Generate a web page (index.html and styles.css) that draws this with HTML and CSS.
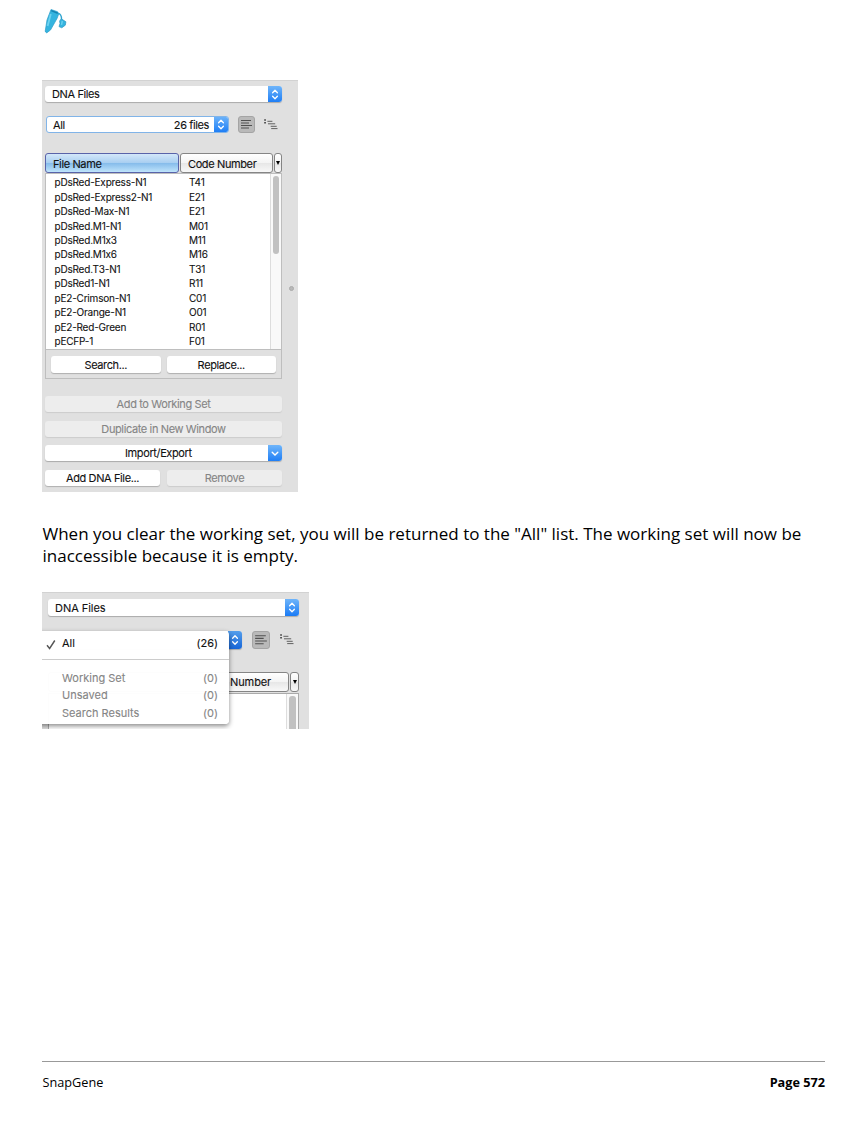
FILE: index.html
```html
<!DOCTYPE html>
<html lang="en">
<head>
<meta charset="utf-8">
<title>SnapGene</title>
<link rel="stylesheet" href="styles.css">
</head>
<body>
<svg width="0" height="0" class="defs">
  <symbol id="updown" viewBox="0 0 14 17"><path d="M4.6 6.8 7 4.3l2.4 2.5M4.6 10.2 7 12.7l2.4-2.5" fill="none" stroke="#fff" stroke-width="1.3" stroke-linecap="round" stroke-linejoin="round"/></symbol>
  <symbol id="lines" viewBox="0 0 15 15"><path d="M2 3.5h10M2 6h8M2 8.5h11M2 11h8" stroke="#505050" stroke-width="1"/></symbol>
  <symbol id="tree" viewBox="0 0 14 12"><path d="M.2 1h1.7M.2 3.8h1.7" stroke="#444" stroke-width="1.5"/><path d="M3.4 2.3h5M4 4.8h7.2M6.7 7.3h6M7.2 9.6h6.3" stroke="#606060" stroke-width="1"/></symbol>
</svg>
<header class="top">
  <svg width="25" height="26" viewBox="0 0 25 26">
    <path d="M9 1.5 15.5 3.7 16.8 5.8 15 10.5 8.5 22 4.6 25 3.2 23.2 5 12z" fill="#35b4df" stroke="#2a9cc8" stroke-width=".7"/>
    <path d="M9.2 2.6 15.8 5.2" stroke="#1784b2" stroke-width="1.5"/>
    <path d="M8.8 6 5.6 18" stroke="#6dd2f0" stroke-width="1.8"/>
    <path d="M16 5.4q3.6.4 3.5 6" fill="none" stroke="#30a5d0" stroke-width="1.4"/>
    <path d="m19.3 10.8 4.6 3-.6 3.4-3.5 2.6-2.8-1.2 1-3-.4-2.6z" fill="#35b4df" stroke="#2a97c2" stroke-width=".7"/>
    <path d="m20.3 13-.8 3.8" stroke="#6dd2f0" stroke-width="1.4"/>
  </svg>
</header>
<section class="panel one">
  <div class="select wide"><span class="t">DNA Files</span><svg class="cap"><use href="#updown"/></svg></div>
  <div class="row filter">
    <div class="select focus"><span class="t">All</span><span class="t count">26 files</span><svg class="cap"><use href="#updown"/></svg></div>
    <svg class="tool"><use href="#lines"/></svg>
    <svg class="tree"><use href="#tree"/></svg>
  </div>
  <div class="row heads"><div class="th sorted"><span class="t">File Name</span></div><div class="th code"><span class="t">Code Number</span></div><div class="th menu-arrow"><svg width="4" height="4"><path d="M0 0h4L2 4z"/></svg></div></div>
  <div class="box">
    <div class="list">
      <div class="names"><span>pDsRed-Express-N1</span><span>pDsRed-Express2-N1</span><span>pDsRed-Max-N1</span><span>pDsRed.M1-N1</span><span>pDsRed.M1x3</span><span>pDsRed.M1x6</span><span>pDsRed.T3-N1</span><span>pDsRed1-N1</span><span>pE2-Crimson-N1</span><span>pE2-Orange-N1</span><span>pE2-Red-Green</span><span>pECFP-1</span></div>
      <div class="codes"><span>T41</span><span>E21</span><span>E21</span><span>M01</span><span>M11</span><span>M16</span><span>T31</span><span>R11</span><span>C01</span><span>O01</span><span>R01</span><span>F01</span></div>
      <div class="scroll"><div class="thumb"></div></div>
    </div>
    <div class="row find"><div class="btn"><span class="t">Search...</span></div><div class="btn"><span class="t">Replace...</span></div></div>
  </div>
  <div class="actions">
    <div class="btn off"><span class="t">Add to Working Set</span></div>
    <div class="btn off"><span class="t">Duplicate in New Window</span></div>
    <div class="select import"><span class="t">Import/Export</span><svg class="cap" viewBox="0 0 14 17"><path d="M4.2 7.3 7 10l2.8-2.7" fill="none" stroke="#fff" stroke-width="1.4" stroke-linecap="round"/></svg></div>
    <div class="row last"><div class="btn"><span class="t">Add DNA File...</span></div><div class="btn off"><span class="t">Remove</span></div></div>
  </div>
  <i class="grip"></i>
</section>
<p class="copy">When you clear the working set, you will be returned to the "All" list. The working set will now be<br>inaccessible because it is empty.</p>
<section class="panel two">
  <div class="select wide"><span class="t">DNA Files</span><svg class="cap"><use href="#updown"/></svg></div>
  <div class="row filter"><div class="select"><svg class="cap"><use href="#updown"/></svg></div><svg class="tool"><use href="#lines"/></svg><svg class="tree"><use href="#tree"/></svg></div>
  <div class="row heads"><div class="th code"><span class="t">Number</span></div><div class="th menu-arrow"><svg width="4" height="4"><path d="M0 0h4L2 4z"/></svg></div></div>
  <div class="stub"><div class="scroll"><div class="thumb"></div></div></div>
  <div class="popup">
    <div class="item first"><svg width="10" height="11" viewBox="0 0 10 11"><path d="M1 6.3 3.6 9.5 8.8 1.5" fill="none" stroke="#555" stroke-width="1.4"/></svg><span class="t">All</span><span class="t total">(26)</span></div>
    <div class="item"><span class="t">Working Set</span><span class="t">(0)</span></div>
    <div class="item"><span class="t">Unsaved</span><span class="t">(0)</span></div>
    <div class="item"><span class="t">Search Results</span><span class="t">(0)</span></div>
  </div>
</section>
<footer class="foot"><span>SnapGene</span><b>Page 572</b></footer>
</body>
</html>
```
FILE: styles.css
```css
* { box-sizing: border-box; }
body { margin: 0; width: 867px; height: 1133px; background: #fff; color: #000; display: flex; flex-direction: column; overflow: hidden; }
.defs { position: absolute; }
svg { display: block; flex: none; }
.top { height: 80px; padding: 8px 0 0 42px; }
.row { display: flex; }
.panel { position: relative; background: #e0e0e0; border-top: 1px solid #d2d2d2; margin-left: 42px; font: 11px/16px Inter, sans-serif; font-feature-settings: "calt" 0; color: #111; overflow: hidden; flex: none; -webkit-text-stroke: .1px; }
.t { white-space: nowrap; }
.one { width: 256px; height: 412px; padding: 5px 16px 0 3px; letter-spacing: -.38px; }
.select { display: flex; align-items: center; height: 17px; background: #fff; border-radius: 3px; box-shadow: 0 1px 1px #aaa; overflow: hidden; }
.cap { width: 14px; height: 17px; background: linear-gradient(#6fb5fa, #1a7bf5); margin-left: auto; }
.one .select.wide { padding-left: 7px; height: 16px; }
.one .filter { margin: 14px 0 0 1px; height: 17px; }
.focus { width: 183px; padding-left: 6px; border: 1px solid #81b4e8; box-shadow: none; }
.count { margin-left: auto; }
.focus .cap { margin-left: 5px; }
.tool { width: 17px; height: 17px; background: #b9b9b9; border: 1px solid #a4a4a4; border-radius: 3px; margin-left: 9px; }
.tree { width: 14px; height: 12px; margin: 3px 0 0 9px; }
.heads { gap: 1px; }
.one .heads { margin-top: 20px; height: 20px; }
.th { height: 20px; border: 1px solid #858585; border-radius: 3px; background: linear-gradient(#fff, #f4f4f4 48%, #e7e7e7 52%, #f8f8f8); line-height: 19px; padding-left: 7px; }
.one .th { line-height: 20px; }
.th.sorted { width: 134px; border-color: #5963a9; background: linear-gradient(#d3e7f9, #a9cff1 48%, #86bceb 52%, #bfe4fb); }
.one .th.code { width: 93px; }
.th.menu-arrow { width: 8px; padding: 0; display: flex; align-items: center; justify-content: center; }
.box { height: 206px; border: 1px solid #bebebe; }
.list { height: 176px; background: #fff; border-bottom: 1px solid #bebebe; display: flex; font-size: 10px; letter-spacing: -.2px; }
.names { width: 135px; padding: 1.3px 0 0 8.5px; }
.codes { width: 89px; padding: 1.3px 0 0 8px; }
.names span, .codes span { display: block; height: 14.45px; line-height: 14.45px; width: max-content; }
.scroll { border-left: 1px solid #ddd; background: #f9f9f9; flex: 1; padding: 2px 2px 0; }
.thumb { width: 6px; height: 78px; border-radius: 3px; background: #c1c1c1; }
.btn { height: 17px; background: #fff; border-radius: 3px; box-shadow: 0 1px 1px #b0b0b0; display: flex; align-items: center; justify-content: center; }
.find { padding: 6px 5px 0; gap: 6px; }
.find .btn { flex: 1; }
.btn.off { background: #ededed; color: #858585; box-shadow: 0 1px 1px #ccc; }
.actions { padding-top: 17px; display: grid; row-gap: 8px; }
.actions .btn { height: 16px; }
.actions > .btn { margin-bottom: .7px; }
.actions .select { height: 16px; }
.import .t { margin-left: 80px; }
.last { gap: 7px; margin-top: 1px; }
.last .btn { width: 115px; }
.grip { position: absolute; left: 247px; top: 205px; width: 5px; height: 5px; border-radius: 50%; background: #b8b8b8; border: 1px solid #aaa; }
.copy { margin: 31px 0 0 42.5px; height: 69px; font: 17px/22px "Open Sans", sans-serif; white-space: nowrap; flex: none; }
.two { width: 267px; height: 137px; padding: 6px 10px 0 6px; }
.two .select.wide { padding-left: 7px; letter-spacing: -.05px; }
.two .filter { margin-top: 15px; height: 18px; }
.two .filter .select { width: 194px; height: 18px; }
.two .filter .cap { height: 18px; background: linear-gradient(#559eeb, #1766d8); }
.two .tool { width: 18px; height: 18px; margin-left: 10px; }
.two .tree { margin-left: 10px; }
.two .heads { margin-top: 23px; }
.two .th.code { width: 241px; padding-left: 181px; letter-spacing: -.1px; }
.two .menu-arrow { width: 9px; }
.stub { height: 40px; margin-top: 1px; border: 1px solid #aaa; background: #fff; display: flex; }
.stub .scroll { margin-left: 237px; }
.stub .thumb { width: 7px; }
.popup { position: absolute; left: -5px; top: 38px; width: 192px; height: 93px; background: #fffffffa; border-radius: 4px; box-shadow: 0 2px 5px #0007; }
.item { display: flex; justify-content: space-between; padding: 0 11px 0 25px; height: 17.4px; line-height: 17.4px; color: #858585; }
.item.first { height: 29px; line-height: 25px; border-bottom: 1px solid #ccc; color: #111; padding-left: 9px; margin-bottom: 10px; }
.first svg { margin: 8px 6px 0 0; }
.total { margin-left: auto; }
.foot { margin: 332px 42px 0; border-top: 1px solid #999; padding: 11px 0 0 .5px; display: flex; justify-content: space-between; font: 12.7px/18px "Open Sans", sans-serif; }
```
